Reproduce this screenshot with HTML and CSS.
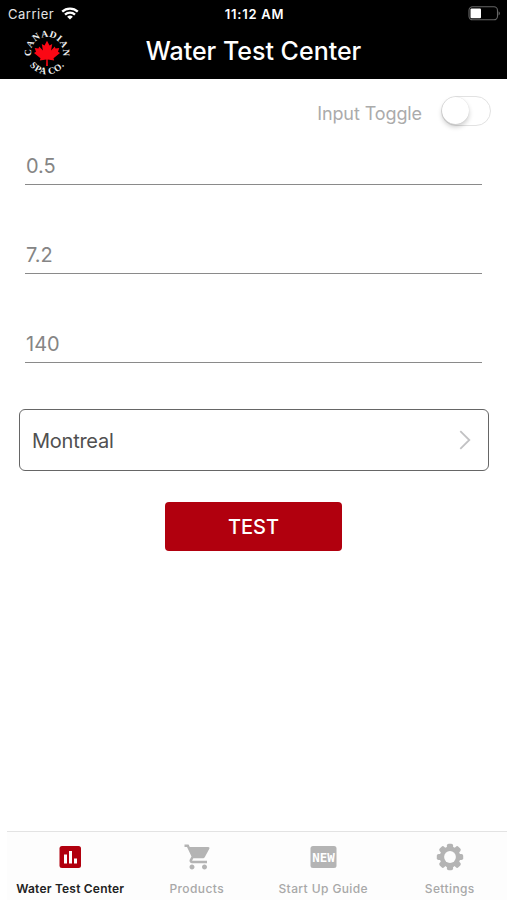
FILE: index.html
```html
<!DOCTYPE html>
<html lang="en">
<head>
<meta charset="utf-8">
<title>Water Test Center</title>
<link rel="stylesheet" href="styles.css">
</head>
<body>
<header class="header">
  <div class="status">
    <div class="carrier"><span>Carrier</span>
      <svg width="18" height="13" viewBox="0 0 18 13" fill="none" stroke="#fff" stroke-width="2.3"><path d="M1.2 4.7a11.2 11.2 0 0 1 15.6 0M4 7.7a7.2 7.2 0 0 1 10 0"/><path d="M9 12.6 6.1 9.8a4.2 4.2 0 0 1 5.8 0z" fill="#fff" stroke="none"/></svg>
    </div>
    <time class="clock">11:12 AM</time>
    <svg class="battery" width="33" height="15" viewBox="0 0 33 15"><rect x="1" y=".8" width="28.500" height="13" rx="3.600" fill="none" stroke="#666" stroke-width="1.100"/><rect x="2.500" y="2.500" width="10.500" height="9.800" rx="1" fill="#fff"/><path d="M30.700 5.200q2 2.100 0 4.200z" fill="#888"/></svg>
  </div>
  <div class="titlebar">
    <svg class="logo" width="50" height="50" viewBox="-25 -25 50 50">
      <defs><path id="top" d="M-15.300 4.500A16 16 0 1 1 15.300 4.500"/><path id="bottom" d="M-21 4A21.400 21.400 0 0 0 21 4"/></defs>
      <path fill="#fb0714" d="M0-12.200 2.500-7.600 5.200-9 4.100-2.600 7.800-6.400 8.500-4.500 12.300-5 11-1.300 13 .1 6.500 5.200 7.200 7.400.7 6.600 .9 13H-.9L-.7 6.600-7.200 7.400-6.500 5.200-13 .1-11-1.300-12.300-5-8.500-4.500-7.800-6.400-4.100-2.600-5.200-9-2.500-7.600z"/>
      <text class="logo-text"><textPath href="#top" startOffset="50%" text-anchor="middle" textLength="56">CANADIAN</textPath></text>
      <text class="logo-text"><textPath href="#bottom" startOffset="50%" text-anchor="middle" textLength="40">SPA CO.</textPath></text>
    </svg>
    <h1 class="title">Water Test Center</h1>
  </div>
</header>
<main class="form">
  <div class="toggle-row"><span class="toggle-label">Input Toggle</span><span class="switch"><span class="knob"></span></span></div>
  <div class="fields">
    <div class="field">0.5</div>
    <div class="field">7.2</div>
    <div class="field">140</div>
  </div>
  <div class="select"><span class="city">Montreal</span>
    <svg width="12" height="20" viewBox="0 0 12 20" fill="none" stroke="#c2c2c4" stroke-width="1.8"><path d="m1.300 1.200 9 8.800-9 8.800"/></svg>
  </div>
  <button class="test">TEST</button>
</main>
<nav class="tabs">
  <div class="tab active">
    <svg width="30" height="30" viewBox="0 0 30 30"><rect x="4.500" y="4" width="21.500" height="22" rx="2.500" fill="#b1000e"/><path fill="#fff" d="M9 12.500h3v9H9zM14 9h3v12.500h-3zM19 16.500h3v5h-3z"/></svg>
    <span class="label">Water Test Center</span>
  </div>
  <div class="tab">
    <svg width="30" height="30" viewBox="1 0 24 24" transform="translate(1.500 0)" fill="#b4b4b4"><path transform="translate(.8 0)" d="M7 18c-1.100 0-1.990.9-1.990 2S5.900 22 7 22s2-.9 2-2-.9-2-2-2zM1 2v2h2l3.600 7.590-1.350 2.450c-.16.280-.25.610-.25.960 0 1.100.9 2 2 2h12v-2H7.420c-.14 0-.25-.11-.25-.25l.03-.12.900-1.630h7.450c.75 0 1.410-.41 1.750-1.030l3.580-6.490A1 1 0 0 0 20 4H5.210l-.94-2H1zm16 16c-1.100 0-1.990.9-1.990 2s.89 2 1.990 2 2-.9 2-2-.9-2-2-2z"/></svg>
    <span class="label">Products</span>
  </div>
  <div class="tab">
    <svg width="30" height="30" viewBox="0 0 30 30"><rect x="2.500" y="4" width="26" height="22" rx="2.500" fill="#b4b4b4"/><text class="new" x="15.500" y="19.500" text-anchor="middle" textLength="22.500" lengthAdjust="spacingAndGlyphs">NEW</text></svg>
    <span class="label">Start Up Guide</span>
  </div>
  <div class="tab">
    <svg width="30" height="30" viewBox="-15 -15 30 30"><g fill="#b4b4b4"><rect id="tooth" x="-3.100" y="-13.200" width="6.200" height="26.400" rx="1.800"/><use href="#tooth" transform="rotate(45)"/><use href="#tooth" transform="rotate(90)"/><use href="#tooth" transform="rotate(135)"/><circle r="10.400"/></g><circle r="5.900" fill="#fdfdfd"/></svg>
    <span class="label">Settings</span>
  </div>
</nav>
</body>
</html>
```
FILE: styles.css
```css
* { box-sizing: border-box; }
body {
  margin: 0;
  width: 507px;
  height: 900px;
  display: flex;
  flex-direction: column;
  overflow: hidden;
  background: #fff;
  font-family: Inter, "Liberation Sans", sans-serif;
}
.header { height: 79px; background: #000; color: #fff; flex: none; }
.status {
  height: 27px;
  display: grid;
  grid-template-columns: 1fr auto 1fr;
  align-items: center;
  padding: 0 6px 0 8px;
  font-size: 13px;
}
.carrier { display: flex; align-items: center; gap: 7px; letter-spacing: .5px; color: #e4e4e4; }
.clock { font-weight: 600; font-size: 13px; letter-spacing: .75px; padding: 1px 0 0; }
.battery { justify-self: end; }
.titlebar {
  height: 52px;
  display: grid;
  grid-template-columns: 50px 1fr 50px;
  padding: 0 22px;
  align-items: start;
}
.logo { margin-top: 1px; }
.logo-text { font: bold 9.5px "Liberation Serif", serif; fill: #eee; }
.title { margin: 9px 0 0; text-align: center; font-size: 25px; line-height: 31px; font-weight: 450; }
.form { flex: 1; display: flex; flex-direction: column; }
.toggle-row {
  display: flex;
  justify-content: flex-end;
  align-items: center;
  gap: 19px;
  height: 38px;
  margin: 14px 16px 0;
  font-size: 18px;
  color: #ababab;
}
.toggle-label { padding-top: 2px; letter-spacing: -.1px; }
.switch { width: 50px; height: 30px; border: 1.5px solid #e2e2e2; border-radius: 15px; margin-top: -3px; }
.knob { display: block; width: 27px; height: 27px; border-radius: 50%; background: #fff; box-shadow: 0 3px 5px rgba(0,0,0,.2), 0 0 1px rgba(0,0,0,.15); }
.fields { padding: 14px 25px 0; }
.field { height: 40px; margin-bottom: 49px; border-bottom: 1px solid #8a8a8a; font-size: 20px; line-height: 42px; text-indent: 1px; color: #858585; }
.select {
  height: 62px;
  margin: -3px 18px 0 19px;
  padding: 0 17px 0 12px;
  border: 1.3px solid #666;
  border-radius: 6px;
  display: flex;
  align-items: center;
  justify-content: space-between;
  font-size: 20px;
  color: #505050;
}
.city { padding-top: 1px; letter-spacing: -.25px; }
.test {
  width: 177px;
  height: 49px;
  margin: 31px 0 0 165px;
  padding: 1px 0 0;
  border: 0;
  border-radius: 4px;
  background: #b1000e;
  color: #fff;
  font: 450 20px Inter, sans-serif;
}
.tabs {
  height: 69px;
  margin-left: 7px;
  display: grid;
  grid-template-columns: repeat(4, 126.5px);
  background: #fdfdfd;
  border-top: 1px solid #e3e3e3;
}
.tab { display: flex; flex-direction: column; align-items: center; padding-top: 10px; color: #a8a8a8; }
.label { margin-top: 8px; font-size: 12px; line-height: 17px; font-weight: 500; letter-spacing: .4px; white-space: nowrap; }
.active { color: #222; }
.active .label { font-weight: 600; letter-spacing: .2px; }
.new { font: bold 11.5px "DejaVu Sans Mono", monospace; fill: #fff; }
```
